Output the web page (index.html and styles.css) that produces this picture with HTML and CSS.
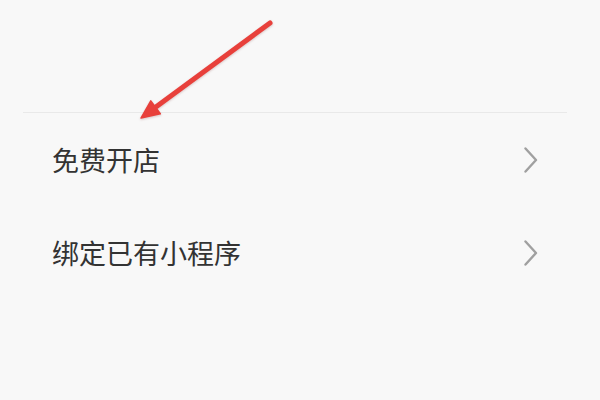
FILE: index.html
```html
<!DOCTYPE html>
<html lang="zh">
<head>
<meta charset="utf-8">
<title>小程序</title>
<link rel="stylesheet" href="styles.css">
</head>
<body>
<div class="page">
  <div class="top"></div>
  <div class="divider"></div>
  <div class="list">
    <div class="row">
      <span class="label">免费开店</span>
      <svg class="chev" width="14" height="26" viewBox="0 0 14 26"><polyline points="1.5,1.5 12,13 1.5,24.5" fill="none" stroke="#a0a0a0" stroke-width="2.4" stroke-linecap="round" stroke-linejoin="round"/></svg>
    </div>
    <div class="row">
      <span class="label">绑定已有小程序</span>
      <svg class="chev" width="14" height="26" viewBox="0 0 14 26"><polyline points="1.5,1.5 12,13 1.5,24.5" fill="none" stroke="#a0a0a0" stroke-width="2.4" stroke-linecap="round" stroke-linejoin="round"/></svg>
    </div>
  </div>
  <svg class="arrow" width="600" height="140" viewBox="0 0 600 140">
    <line x1="270" y1="23" x2="155.5" y2="107.3" stroke="#e8403b" stroke-width="5" stroke-linecap="round"/>
    <polygon points="141,118 160.3,113.8 150.8,100.9" fill="#e8403b" stroke="#e8403b" stroke-width="1.5" stroke-linejoin="round"/>
  </svg>
</div>
</body>
</html>
```

FILE: styles.css
```css
html, body {
  margin: 0;
  padding: 0;
  background: #f8f8f8;
}
.page {
  position: relative;
  width: 600px;
  height: 400px;
  overflow: hidden;
  background: #f8f8f8;
  font-family: "Noto Sans CJK SC", "Noto Sans", sans-serif;
}
.top {
  height: 112px;
}
.divider {
  height: 1px;
  margin: 0 33px 0 23px;
  background: #e9e9e9;
}
.list {
  display: flex;
  flex-direction: column;
}
.row {
  height: 93px;
  display: flex;
  align-items: center;
  justify-content: space-between;
  padding: 0 62px 0 52px;
}
.label {
  font-size: 27px;
  color: #333333;
  line-height: 1;
}
.chev {
  display: block;
}
.arrow {
  position: absolute;
  left: 0;
  top: 0;
  filter: drop-shadow(0 1px 1px rgba(120, 40, 40, 0.25));
}
```
